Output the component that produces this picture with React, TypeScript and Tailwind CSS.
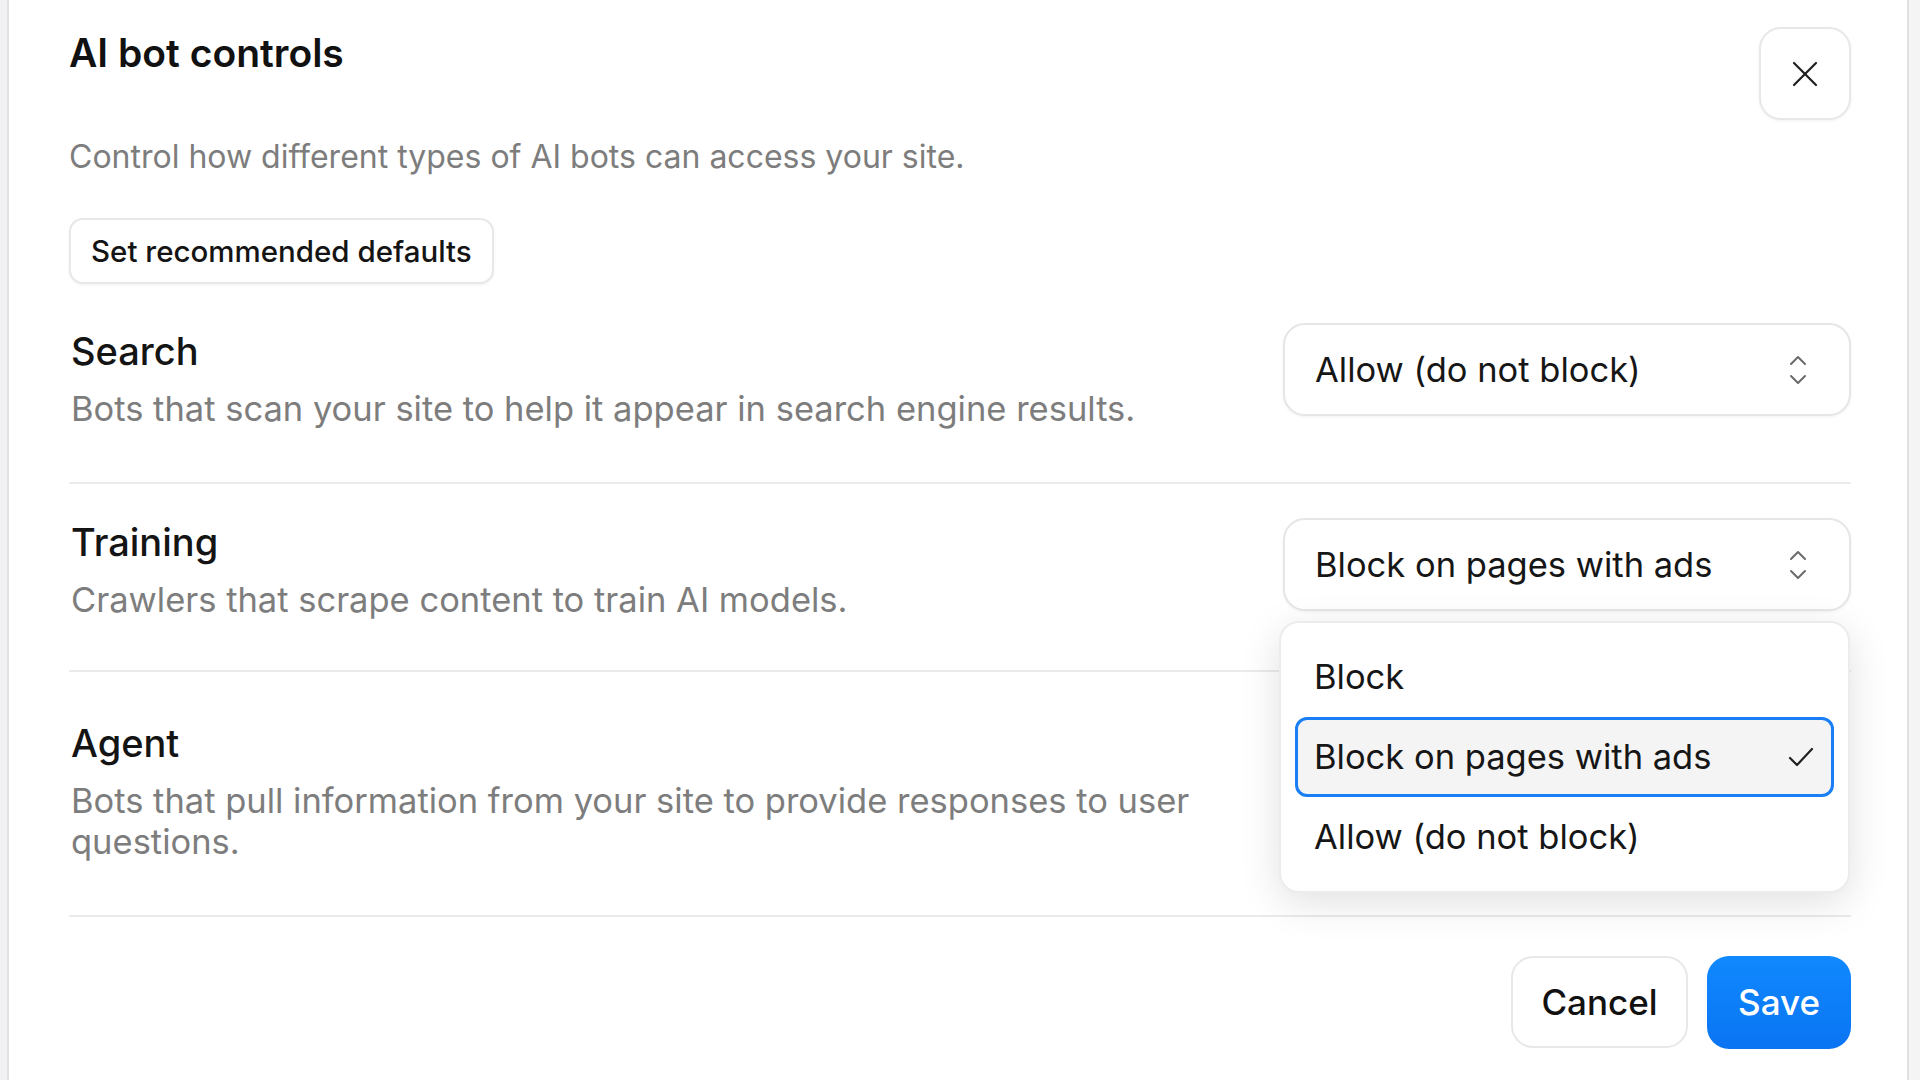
import { useState } from "react";

type Option = "Block" | "Block on pages with ads" | "Allow (do not block)";

const options: Option[] = ["Block", "Block on pages with ads", "Allow (do not block)"];

function UpDown() {
  return (
    <svg width="22" height="34" viewBox="0 0 22 34" fill="none" stroke="#6b6b6b" strokeWidth="2" strokeLinecap="round" strokeLinejoin="round">
      <path d="M4 11 L11 4 L18 11" />
      <path d="M4 23 L11 30 L18 23" />
    </svg>
  );
}

function SelectBox({ value, hidden }: { value: Option; hidden?: boolean }) {
  return (
    <button
      className={
        "flex h-[93px] w-[568px] shrink-0 items-center justify-between rounded-[22px] border-2 border-[#e6e6e6] bg-white pl-[30px] pr-[40px] text-[34.5px] text-[#161616] shadow-[0_1px_3px_rgba(0,0,0,0.06)] " +
        (hidden ? "invisible" : "")
      }
    >
      <span>{value}</span>
      <UpDown />
    </button>
  );
}

function Row({
  title,
  desc,
  value,
  rowClass,
  textClass,
  hidden,
}: {
  title: string;
  desc: string;
  value: Option;
  rowClass: string;
  textClass: string;
  hidden?: boolean;
}) {
  return (
    <div className={"flex items-start justify-between border-b-2 border-[#ebebeb] " + rowClass}>
      <div className={"max-w-[1180px] pl-[2px] " + textClass}>
        <div className="text-[38px] font-medium leading-[44px] text-[#141414]">{title}</div>
        <div className="mt-[15px] text-[34.5px] leading-[41px] text-[#7d7d7d]">{desc}</div>
      </div>
      <SelectBox value={value} hidden={hidden} />
    </div>
  );
}

export default function App() {
  const [selected, setSelected] = useState<Option>("Block on pages with ads");

  return (
    <div
      className="flex h-screen w-full overflow-hidden bg-[#f3f3f4]"
      style={{ fontFamily: "Inter, 'Noto Sans', sans-serif" }}
    >
      <div className="w-[9px] shrink-0 border-r-2 border-[#e2e2e4] bg-[#f1f1f3]" />
      <div className="relative flex-1 bg-white pl-[60px] pr-[56px] pt-[27px]">
        <div className="flex items-start justify-between">
          <h1 className="text-[39px] font-semibold leading-[52px] text-[#111]">AI bot controls</h1>
          <button className="flex h-[93px] w-[92px] items-center justify-center rounded-[22px] border-2 border-[#e8e8e8] bg-white shadow-[0_1px_3px_rgba(0,0,0,0.06)]">
            <svg width="28" height="28" viewBox="0 0 28 28" stroke="#1f1f1f" strokeWidth="2.2" strokeLinecap="round">
              <path d="M3 3 L25 25" />
              <path d="M25 3 L3 25" />
            </svg>
          </button>
        </div>

        <p className="mt-[17px] text-[32px] leading-[40px] text-[#7d7d7d]">
          Control how different types of AI bots can access your site.
        </p>

        <button className="mt-[41px] h-[66px] rounded-[14px] border-2 border-[#e8e8e8] bg-white px-[20px] text-[29.5px] font-medium text-[#141414] shadow-[0_1px_3px_rgba(0,0,0,0.06)]">
          Set recommended defaults
        </button>

        <Row
          title="Search"
          desc="Bots that scan your site to help it appear in search engine results."
          value="Allow (do not block)"
          rowClass="mt-[39px] pb-[53px]"
          textClass="pt-[6px]"
        />
        <Row
          title="Training"
          desc="Crawlers that scrape content to train AI models."
          value={selected}
          rowClass="pt-[34px] pb-[50px]"
          textClass="pt-[2px]"
        />
        <Row
          title="Agent"
          desc="Bots that pull information from your site to provide responses to user questions."
          value="Block"
          rowClass="pt-[49px] pb-[53px]"
          textClass=""
          hidden
        />

        <div className="mt-[39px] flex justify-end gap-[19px]">
          <button className="h-[92px] w-[177px] rounded-[22px] border-2 border-[#e8e8e8] bg-white text-[35px] font-medium text-[#111]">
            Cancel
          </button>
          <button className="h-[93px] w-[144px] rounded-[22px] bg-gradient-to-b from-[#1189ff] to-[#0a74f2] text-[35px] font-medium text-white">
            Save
          </button>
        </div>

        <div className="absolute left-[1270px] top-[621px] w-[571px] rounded-[20px] border-2 border-[#ececec] bg-white p-[14px] shadow-[0_10px_40px_rgba(0,0,0,0.12)]">
          {options.map((o) => {
            const active = o === selected;
            return (
              <div
                key={o}
                onClick={() => setSelected(o)}
                className={
                  "flex h-[80px] items-center justify-between rounded-[12px] border-[3px] px-[16px] text-[34.5px] text-[#161616] " +
                  (active ? "border-[#1a7ef5] bg-[#f4f4f5]" : "border-transparent")
                }
              >
                <span>{o}</span>
                {active && (
                  <svg width="28" height="24" viewBox="0 0 28 24" fill="none" stroke="#222" strokeWidth="2.2" strokeLinecap="round" strokeLinejoin="round">
                    <path d="M3 13 L10 20 L25 4" />
                  </svg>
                )}
              </div>
            );
          })}
        </div>
      </div>
      <div className="w-[13px] shrink-0 border-l-2 border-[#e0e0e2] bg-[#f4f4f5]" />
    </div>
  );
}
